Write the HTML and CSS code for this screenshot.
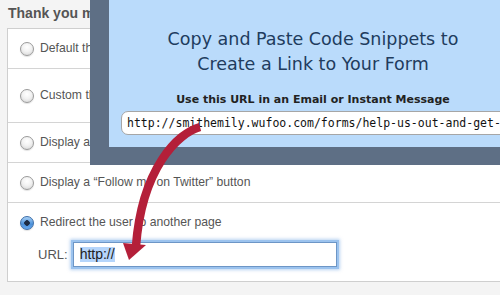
FILE: index.html
```html
<!DOCTYPE html>
<html lang="en">
<head>
    <meta charset="UTF-8">
    <meta name="viewport" content="width=device-width, initial-scale=1.0">
    <title>Thank you message</title>
    <link rel="stylesheet" href="styles.css">
</head>
<body>
    <div class="page">
        <h3 class="section-title">Thank you message</h3>
        <div class="options">
            <div class="option">
                <span class="radio"></span>
                <span class="label">Default thank you message</span>
            </div>
            <div class="option option-tall">
                <span class="radio"></span>
                <span class="label">Custom thank you message</span>
            </div>
            <div class="option">
                <span class="radio"></span>
                <span class="label">Display a link to the form</span>
            </div>
            <div class="option">
                <span class="radio"></span>
                <span class="label">Display a “Follow me on Twitter” button</span>
            </div>
            <div class="option option-redirect">
                <div class="option-head">
                    <span class="radio checked"></span>
                    <span class="label">Redirect the user to another page</span>
                </div>
                <div class="url-row">
                    <span class="url-label">URL:</span>
                    <div class="url-input"><span class="selected">http://</span></div>
                </div>
            </div>
        </div>
    </div>

    <div class="popup">
        <div class="popup-inner">
            <h2>Copy and Paste Code Snippets to<br>Create a Link to Your Form</h2>
            <p class="hint">Use this URL in an Email or Instant Message</p>
            <div class="link-field">http://smithemily.wufoo.com/forms/help-us-out-and-get-a-free-gift/</div>
        </div>
    </div>

    <svg class="arrow" width="500" height="295" viewBox="0 0 500 295">
        <path d="M200 127 C178 133 142 168 136 246" fill="none" stroke="#b41f39" stroke-width="8.5"/>
        <polygon points="123,243 146,245 129,260" fill="#b41f39"/>
    </svg>
</body>
</html>
```

FILE: styles.css
```css
body {
    margin: 0;
    padding: 0;
    background: #f4f4f4;
    color: #555;
    font-family: 'Liberation Sans', arial, sans-serif;
    overflow: hidden;
    width: 500px;
    height: 295px;
}
.page {
    width: 640px;
}
.section-title {
    margin: 0;
    padding: 4px 0 0 8px;
    height: 24px;
    font-size: 14px;
    line-height: 18px;
    color: #555;
}
.options {
    margin-left: 7px;
    background: #fff;
    border: 1px solid #cfcfcf;
}
.option {
    display: flex;
    align-items: center;
    padding: 12px 0 12px 12px;
    border-bottom: 1px solid #d4d4d4;
    font-size: 12.2px;
    line-height: 15px;
}
.option:last-child {
    border-bottom: none;
}
.option-tall {
    padding: 19px 0 19px 12px;
}
.option-redirect {
    display: block;
    padding-bottom: 11px;
}
.option-head {
    display: flex;
    align-items: center;
}
.radio {
    width: 12px;
    height: 12px;
    border: 1px solid #9a9a9a;
    border-radius: 50%;
    background: radial-gradient(circle at 50% 35%, #fff 0%, #f2f2f2 45%, #d2d2d2 100%);
    box-shadow: 0 1px 1px rgba(0, 0, 0, 0.12);
    margin-right: 6px;
    flex-shrink: 0;
}
.radio.checked {
    border-color: #3d6ea8;
    background: radial-gradient(circle, #1d2c44 0, #1d2c44 2.5px, transparent 3px),
                linear-gradient(#a9d1f7, #4a8fd8 60%, #6aaaf0);
}
.label {
    white-space: nowrap;
}
.url-row {
    display: flex;
    align-items: center;
    margin-top: 9px;
    padding-left: 18px;
    font-size: 13px;
}
.url-label {
    margin-right: 2px;
}
.url-input {
    width: 256px;
    height: 23px;
    padding: 0 0 0 6px;
    border: 1px solid #6d96c6;
    box-shadow: 0 0 0 2px #9cc3ee, 0 0 3px 3px rgba(120, 170, 230, 0.5);
    margin: 3px 0 3px 3px;
    display: flex;
    align-items: center;
    color: #222;
    font-size: 14px;
}
.selected {
    background: #b5d5fb;
}

.popup {
    position: absolute;
    top: 0;
    left: 90px;
    width: 446px;
    padding: 0 19px 18px;
    box-sizing: border-box;
    background: #5e6f85;
}
.popup-inner {
    height: 147px;
    background: #badbfb;
    text-align: center;
    padding-top: 27px;
    box-sizing: border-box;
}
.popup h2 {
    margin: 0;
    font-family: 'DejaVu Sans', sans-serif;
    font-weight: normal;
    font-size: 17.5px;
    line-height: 25px;
    color: #213c5e;
}
.popup .hint {
    margin: 16px 0 0;
    font-family: 'DejaVu Sans', sans-serif;
    font-weight: bold;
    font-size: 11px;
    line-height: 14px;
    color: #222;
}
.link-field {
    margin: 4px 0 0 12px;
    height: 24px;
    box-sizing: border-box;
    padding: 0 0 0 5px;
    background: #fff;
    border: 1px solid #a6a6a6;
    border-radius: 7px 0 0 7px;
    text-align: left;
    white-space: nowrap;
    overflow: hidden;
    font-family: 'DejaVu Sans Mono', monospace;
    font-size: 11.5px;
    line-height: 22px;
    color: #111;
}
.arrow {
    position: absolute;
    top: 0;
    left: 0;
    pointer-events: none;
}
```
